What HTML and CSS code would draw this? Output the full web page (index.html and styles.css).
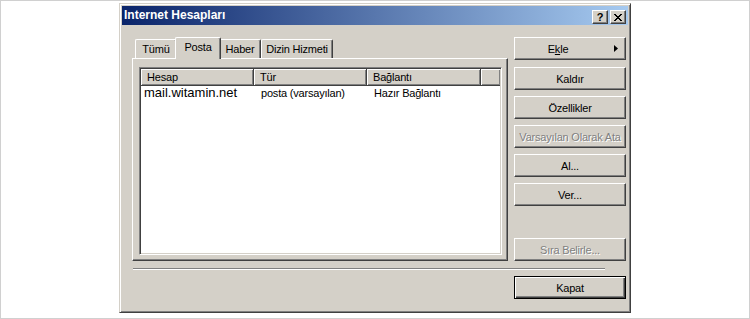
FILE: index.html
```html
<!DOCTYPE html>
<html lang="tr">
<head>
  <meta charset="UTF-8" />
  <title>Internet Hesapları</title>
  <link rel="stylesheet" href="styles.css">
</head>
<body>
  <div class="page">
    <div class="dialog">
      <div class="titlebar">
        <span class="title">Internet Hesapları</span>
        <div class="caption-buttons">
          <div class="cap-btn help">?</div>
          <div class="cap-btn close">
            <svg width="8" height="7" viewBox="0 0 8 7"><path d="M0 0 L7 7 M1 0 L8 7 M7 0 L0 7 M8 0 L1 7" stroke="#000" stroke-width="1" fill="none"/></svg>
          </div>
        </div>
      </div>

      <div class="body">
        <div class="main">
          <div class="left">
            <div class="tabs">
              <div class="tab tab-all">Tümü</div>
              <div class="tab tab-mail active">Posta</div>
              <div class="tab tab-news">Haber</div>
              <div class="tab tab-dir">Dizin Hizmeti</div>
            </div>
            <div class="panel">
              <div class="listview">
                <div class="lv-header">
                  <div class="hcell c1">Hesap</div>
                  <div class="hcell c2">Tür</div>
                  <div class="hcell c3">Bağlantı</div>
                  <div class="hcell rest"></div>
                </div>
                <div class="lv-row">
                  <div class="cell c1 account">mail.witamin.net</div>
                  <div class="cell c2">posta (varsayılan)</div>
                  <div class="cell c3">Hazır Bağlantı</div>
                </div>
              </div>
            </div>
          </div>

          <div class="side">
            <button class="btn btn-menu"><span class="label">E<u>k</u>le</span><span class="arrow"><svg width="4" height="7" viewBox="0 0 4 7"><path d="M0 0 L4 3.5 L0 7 Z" fill="#000"/></svg></span></button>
            <button class="btn">Kaldır</button>
            <button class="btn">Özellikler</button>
            <button class="btn disabled">Varsayılan Olarak Ata</button>
            <button class="btn">Al...</button>
            <button class="btn">Ver...</button>
            <button class="btn disabled bottom">Sıra Belirle...</button>
          </div>
        </div>

        <div class="separator"></div>

        <div class="footer">
          <button class="btn default">Kapat</button>
        </div>
      </div>
    </div>
  </div>
</body>
</html>
```

FILE: styles.css
```css
body {
  margin: 0;
  background: #fff;
  font-family: "Liberation Sans", Arial, sans-serif;
  font-size: 11px;
  letter-spacing: -0.2px;
  color: #000;
}

.page {
  width: 750px;
  height: 319px;
  box-sizing: border-box;
  border: 1px solid #d0d0d0;
  padding: 2px 0 0 118px;
}

.dialog {
  width: 512px;
  height: 310px;
  box-sizing: border-box;
  background: #d4d0c8;
  border: 1px solid;
  border-color: #d4d0c8 #404040 #404040 #d4d0c8;
  box-shadow: inset 1px 1px #fff, inset -1px -1px #808080;
  padding: 2px;
}

.titlebar {
  height: 19px;
  display: flex;
  align-items: flex-start;
  justify-content: space-between;
  background: linear-gradient(to right, #0a246a, #a6caf0);
  padding: 0 2px 0 2px;
}

.title {
  color: #fff;
  font-weight: bold;
  font-size: 12px;
  letter-spacing: 0;
  line-height: 19px;
}

.caption-buttons {
  display: flex;
  gap: 2px;
  margin-top: 4px;
}

.cap-btn {
  width: 16px;
  height: 14px;
  box-sizing: border-box;
  background: #d4d0c8;
  border: 1px solid;
  border-color: #fff #404040 #404040 #fff;
  box-shadow: inset -1px -1px #808080;
  display: flex;
  align-items: center;
  justify-content: center;
}

.cap-btn.help {
  font-weight: bold;
  font-size: 11px;
  line-height: 12px;
}

.body {
  padding: 12px 2px 0 10px;
}

.main {
  display: flex;
  gap: 6px;
}

.left {
  width: 376px;
}

.tabs {
  display: flex;
  align-items: flex-end;
  height: 21px;
  padding-left: 3px;
  position: relative;
  z-index: 1;
}

.tab {
  height: 19px;
  box-sizing: border-box;
  border: 1px solid;
  border-bottom: none;
  border-color: #fff #404040 #404040 #fff;
  border-radius: 2px 2px 0 0;
  box-shadow: inset -1px 0 #808080;
  display: flex;
  align-items: center;
  justify-content: center;
  background: #d4d0c8;
}

.tab-all { width: 42px; }
.tab-mail { width: 42px; }
.tab-news { width: 42px; }
.tab-dir { width: 72px; }

.tab.active {
  width: 46px;
  height: 22px;
  margin: 0 -2px -1px;
  padding-bottom: 3px;
  position: relative;
  z-index: 2;
}

.panel {
  height: 203px;
  box-sizing: border-box;
  border: 1px solid;
  border-color: #fff #404040 #404040 #fff;
  box-shadow: inset -1px -1px #808080;
  padding: 8px 0 0 6px;
}

.listview {
  width: 363px;
  height: 188px;
  box-sizing: border-box;
  background: #fff;
  border: 1px solid;
  border-color: #808080 #fff #fff #808080;
  box-shadow: inset 1px 1px #404040, inset -1px -1px #d4d0c8;
  padding: 1px;
}

.lv-header {
  display: flex;
  height: 17px;
}

.hcell {
  box-sizing: border-box;
  background: #d4d0c8;
  border-right: 1px solid #404040;
  border-bottom: 1px solid #404040;
  box-shadow: inset 1px 1px #fff, inset -1px -1px #808080;
  padding-left: 6px;
  line-height: 16px;
}

.c1 { width: 113px; }
.c2 { width: 113px; }
.c3 { width: 114px; }
.hcell.rest { flex: 1; border-right: none; }

.lv-row {
  display: flex;
  align-items: baseline;
  line-height: 14px;
}

.cell {
  box-sizing: border-box;
  padding-left: 7px;
  white-space: nowrap;
}

.cell.account {
  font-size: 13px;
  letter-spacing: 0;
  padding-left: 3px;
}

.side {
  width: 112px;
  display: flex;
  flex-direction: column;
  gap: 6px;
}

.btn {
  width: 112px;
  height: 23px;
  box-sizing: border-box;
  background: #d4d0c8;
  border: 1px solid;
  border-color: #fff #404040 #404040 #fff;
  box-shadow: inset -1px -1px #808080;
  font-family: "Liberation Sans", Arial, sans-serif;
  font-size: 11px;
  letter-spacing: -0.2px;
  color: #000;
  padding: 0;
  text-align: center;
}

.btn-menu {
  display: flex;
  align-items: center;
  margin-bottom: 1px;
}

.btn-menu .label {
  flex: 1;
  text-align: center;
}

.btn-menu .arrow {
  width: 24px;
  display: flex;
  justify-content: flex-end;
  padding-right: 7px;
  box-sizing: border-box;
}

.btn.disabled {
  color: #808080;
  text-shadow: 1px 1px #fff;
}

.btn.bottom {
  margin-top: auto;
}

.separator {
  width: 472px;
  margin: 7px 0 0 1px;
  height: 0;
  border-top: 1px solid #808080;
  border-bottom: 1px solid #fff;
}

.footer {
  display: flex;
  justify-content: flex-end;
  margin-top: 6px;
}

.btn.default {
  border: 1px solid #000;
  box-shadow: inset 1px 1px #fff, inset -1px -1px #404040, inset -2px -2px #808080;
}
```
